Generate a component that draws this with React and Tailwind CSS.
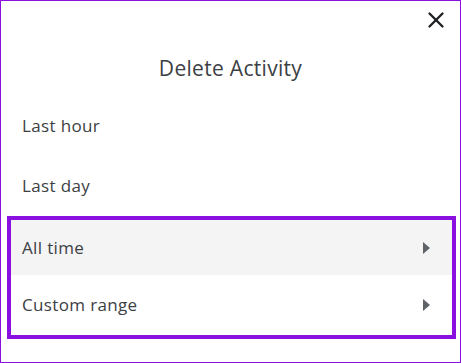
import { X } from 'lucide-react';

const ITEMS = [
  { label: 'Last hour' },
  { label: 'Last day' },
];

const RANGES = [
  { label: 'All time', hover: true, h: 'h-[55px]' },
  { label: 'Custom range', h: 'h-[60px]' },
];

function Arrow() {
  return (
    <svg width="7" height="12" viewBox="0 0 7 12" className="shrink-0">
      <path d="M0 0l7 6-7 6z" fill="#5f6368" />
    </svg>
  );
}

function Row({ label, hover, arrow, inset, h = 'h-[60px]' }) {
  return (
    <div
      className={`${h} flex items-center justify-between text-[17px] tracking-[0.35px] text-[#3c4043] ${
        inset ? 'pl-[11px] pr-[22px]' : 'pl-[21px] pr-[26px]'
      } ${hover ? 'bg-[#f4f4f4]' : ''}`}
    >
      <span>{label}</span>
      {arrow && <Arrow />}
    </div>
  );
}

export default function App() {
  return (
    <div
      className="w-[461px] h-[363px] border border-[#8a10e0] bg-white flex flex-col"
      style={{ fontFamily: '"Open Sans", Roboto, sans-serif' }}
    >
      <div className="h-[36px] flex justify-end items-start pt-[6px] pr-[11px]">
        <X size={26} strokeWidth={2.2} color="#202124" />
      </div>
      <h1 className="h-[59px] flex items-start justify-center pt-[19px] text-[21px] leading-[24px] tracking-[0.3px] text-[#3c4043]">
        Delete Activity
      </h1>
      {ITEMS.map(item => (
        <Row key={item.label} {...item} />
      ))}
      <div className="ml-[6px] mr-[4px] border-4 border-[#8a10e0]">
        {RANGES.map(item => (
          <Row key={item.label} {...item} arrow inset />
        ))}
      </div>
    </div>
  );
}
